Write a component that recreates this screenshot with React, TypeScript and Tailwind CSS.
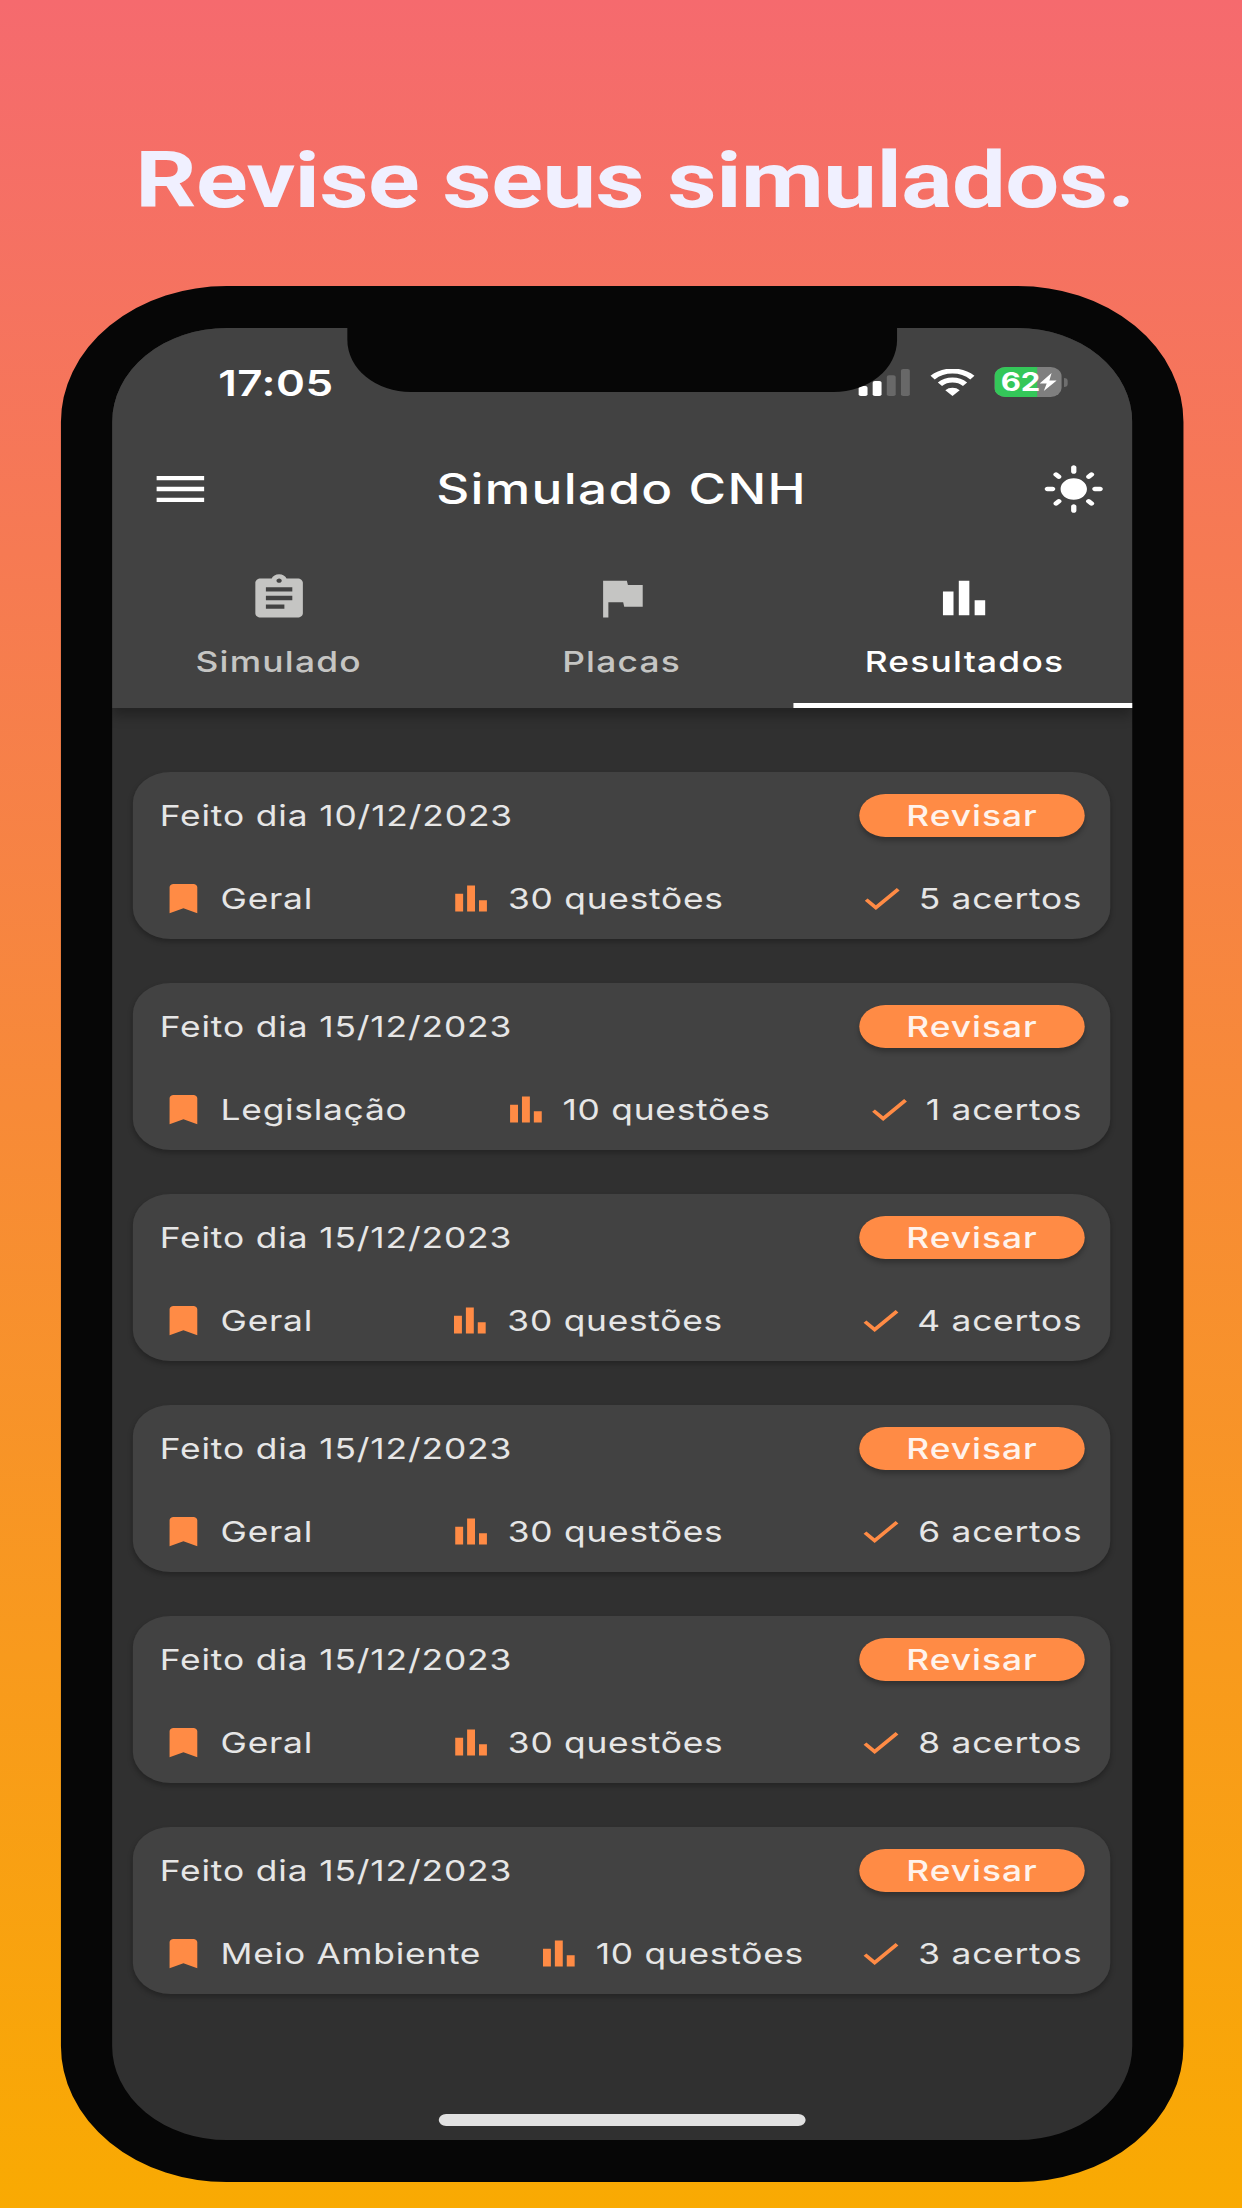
import { MdAssignment, MdBarChart, MdBookmark, MdCheck, MdFlag, MdLightMode, MdMenu } from 'react-icons/md';

type Result = {
  date: string;
  category: string;
  questions: number;
  hits: number;
};

const results: Result[] = [
  { date: '10/12/2023', category: 'Geral', questions: 30, hits: 5 },
  { date: '15/12/2023', category: 'Legislação', questions: 10, hits: 1 },
  { date: '15/12/2023', category: 'Geral', questions: 30, hits: 4 },
  { date: '15/12/2023', category: 'Geral', questions: 30, hits: 6 },
  { date: '15/12/2023', category: 'Geral', questions: 30, hits: 8 },
  { date: '15/12/2023', category: 'Meio Ambiente', questions: 10, hits: 3 },
];

const tabs = [
  { label: 'Simulado', icon: MdAssignment, active: false },
  { label: 'Placas', icon: MdFlag, active: false },
  { label: 'Resultados', icon: MdBarChart, active: true },
];

const StatusBar = () => (
  <div className="flex h-[101px] items-start justify-between pl-[87px] pr-[53px] pt-[30px]">
    <span className="mt-[3px] text-[36px] leading-[44px] font-semibold tracking-[0.4px] text-white">17:05</span>

    <div className="flex items-center pt-[9px]">
      {/* Signal */}
      <svg className="h-[27px] w-[43px]" viewBox="0 0 43 27">
        <rect x="0.5" y="17" width="7.3" height="10" rx="1.8" fill="#fff" />
        <rect x="12" y="12" width="7.3" height="15" rx="1.8" fill="#fff" />
        <rect x="23.6" y="6.3" width="7.3" height="20.7" rx="1.8" fill="#686868" />
        <rect x="35.2" y="0" width="7.3" height="27" rx="1.8" fill="#686868" />
      </svg>
      {/* Wifi */}
      <svg className="ml-[16px] h-[27px] w-[37px]" viewBox="0 0 37 27">
        <path d="M2.2 8.6a23.5 23.5 0 0 1 32.6 0" fill="none" stroke="#fff" strokeWidth="5" />
        <path d="M8.2 15.2a15 15 0 0 1 20.6 0" fill="none" stroke="#fff" strokeWidth="5" />
        <path d="M12.6 21.2a8.4 8.4 0 0 1 11.8 0L18.5 27z" fill="#fff" />
      </svg>
      {/* Battery */}
      <div className="relative ml-[16px] flex h-[30px] w-[55px] items-center overflow-hidden rounded-[9px] bg-[#7f7f7f]">
        <div className="absolute inset-y-0 left-0 w-[35px] bg-[#34c759]" />
        <span className="relative pl-[5px] text-[25.5px] leading-[30px] font-bold text-white">62</span>
        <svg className="relative -ml-[1px] h-[18px] w-[14px]" viewBox="0 0 14 18">
          <path d="M9.8 0 0 10.4h5.8L3.4 18 14 7.4H8z" fill="#fff" />
        </svg>
      </div>
      <div className="ml-[2px] h-[9px] w-[3px] rounded-r-full bg-[#6e6e6e]" />
    </div>
  </div>
);

const AppBar = () => (
  <header className="relative z-10 h-[380px] bg-[#424242] shadow-[0_8px_10px_rgba(0,0,0,0.28)]">
    <StatusBar />

    <div className="flex h-[120px] items-center justify-between pl-[30px] pr-[22px]">
      <MdMenu className="size-[52px] text-white" />
      <h2 className="mr-[9px] mb-[2px] text-[42px] font-[450] tracking-[1.1px] text-white">Simulado CNH</h2>
      <MdLightMode className="size-[52px] text-white" />
    </div>

    {/* Tabs */}
    <nav className="-mr-[3px] -ml-[4px] grid h-[159px] grid-cols-3">
      {tabs.map(({ label, icon: Icon, active }) => (
        <div
          key={label}
          className={`flex flex-col items-center border-b-5 pt-[23px] ${active ? 'border-white text-white' : 'border-transparent text-[#c5c5c3]'}`}
        >
          <Icon className="size-[52px]" />
          <span className="mt-[20px] text-[29px] leading-[36px] font-[450] tracking-[1px]">{label}</span>
        </div>
      ))}
    </nav>
  </header>
);

const ResultCard = ({ date, category, questions, hits }: Result) => (
  <div className="h-[167px] rounded-[31px] bg-[#424242] pt-[22px] pr-[21px] pl-[22px] text-[29px] leading-[36px] tracking-[0.7px] text-[#e6e6e6] shadow-[0_3px_5px_rgba(0,0,0,0.25)]">
    <div className="flex h-[43px] items-center justify-between">
      <span>Feito dia {date}</span>
      <button className="h-[43px] w-[185px] rounded-full bg-[#ff8b45] font-[450] tracking-[0.8px] text-[#fff3ec] shadow-[0_4px_5px_rgba(0,0,0,0.25)]">
        Revisar
      </button>
    </div>

    <div className="mt-[42px] flex items-center justify-between pr-[2px] tracking-[0.6px]">
      <div className="flex items-center gap-[11px]">
        <MdBookmark className="size-[39px] text-[#ff8b45]" />
        <span>{category}</span>
      </div>
      <div className="flex items-center gap-[11px]">
        <MdBarChart className="size-[39px] text-[#ff8b45]" />
        <span>{questions} questões</span>
      </div>
      <div className="flex items-center gap-[11px]">
        <MdCheck className="size-[39px] text-[#ff8b45]" />
        <span>{hits} acertos</span>
      </div>
    </div>
  </div>
);

export default function App() {
  return (
    <div className="h-[2208px] w-[1242px] overflow-hidden bg-linear-to-b/srgb from-[#f56a6e] to-[#f9aa02]">
      {/* The artwork is laid out on a 1019px canvas and widened to the store format */}
      <div className="h-[2208px] w-[1019px] origin-top-left scale-x-[1.2188] font-[Inter,sans-serif]">
        <h1 className="h-[286px] pt-[134px] pl-[111px] font-[Roboto,sans-serif] text-[78.5px] leading-[92px] font-bold tracking-[-0.4px] whitespace-nowrap text-[#f0f0ff]">
          Revise seus simulados.
        </h1>

        {/* Phone */}
        <div className="relative ml-[50px] flex h-[1896px] w-[921px] flex-col overflow-hidden rounded-[136px] border-[42px] border-[#060606] bg-[#303030]">
          <AppBar />

          <main className="flex flex-1 flex-col gap-[44px] pt-[64px] pr-[18px] pl-[17px]">
            {results.map((result, idx) => (
              <ResultCard key={idx} {...result} />
            ))}
          </main>

          <div className="mx-auto mb-[14px] h-[12px] w-[301px] shrink-0 rounded-full bg-[#e1e1e1]" />

          {/* Notch */}
          <div className="absolute top-0 left-[193px] z-20 h-[64px] w-[451px] rounded-b-[52px] bg-[#060606]" />
        </div>
      </div>
    </div>
  );
}
